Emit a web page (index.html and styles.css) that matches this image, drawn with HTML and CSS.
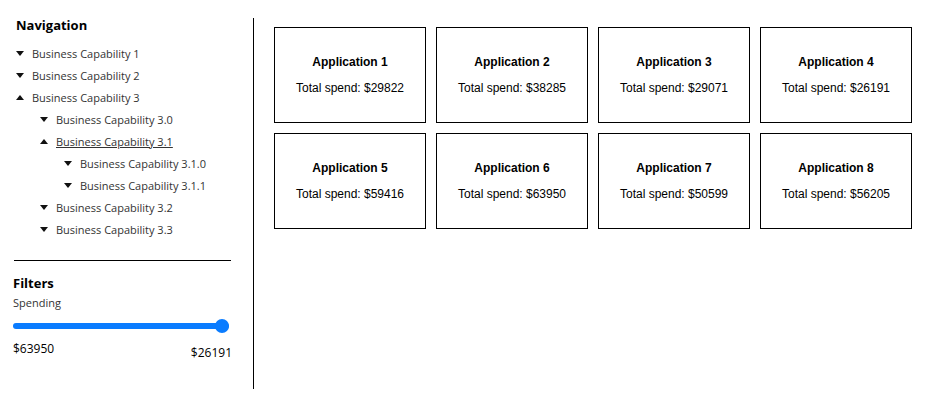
FILE: index.html
```html
<!DOCTYPE html>
<html>
<head>
<meta charset="utf-8">
<link rel="stylesheet" href="styles.css">
</head>
<body>
<div class="layout">
  <aside class="sidebar">
    <section class="nav">
      <h2 class="nav-title">Navigation</h2>
      <ul class="tree">
        <li class="node"><span class="caret down"></span><span class="label">Business Capability 1</span></li>
        <li class="node"><span class="caret down"></span><span class="label">Business Capability 2</span></li>
        <li class="node"><span class="caret up"></span><span class="label">Business Capability 3</span></li>
        <li class="node lvl2"><span class="caret down"></span><span class="label">Business Capability 3.0</span></li>
        <li class="node lvl2"><span class="caret up"></span><span class="label active">Business Capability 3.1</span></li>
        <li class="node lvl3"><span class="caret down"></span><span class="label">Business Capability 3.1.0</span></li>
        <li class="node lvl3"><span class="caret down"></span><span class="label">Business Capability 3.1.1</span></li>
        <li class="node lvl2"><span class="caret down"></span><span class="label">Business Capability 3.2</span></li>
        <li class="node lvl2"><span class="caret down"></span><span class="label">Business Capability 3.3</span></li>
      </ul>
    </section>
    <hr class="rule">
    <section class="filters">
      <h2 class="filters-title">Filters</h2>
      <div class="filter-label">Spending</div>
      <input class="slider" type="range" min="26191" max="63950" value="63950">
      <div class="range-values">
        <span class="min">$63950</span>
        <span class="max">$26191</span>
      </div>
    </section>
  </aside>
  <div class="divider"></div>
  <main class="main">
    <div class="grid">
      <div class="card"><div class="card-title">Application 1</div><div class="card-spend">Total spend: $29822</div></div>
      <div class="card"><div class="card-title">Application 2</div><div class="card-spend">Total spend: $38285</div></div>
      <div class="card"><div class="card-title">Application 3</div><div class="card-spend">Total spend: $29071</div></div>
      <div class="card"><div class="card-title">Application 4</div><div class="card-spend">Total spend: $26191</div></div>
      <div class="card"><div class="card-title">Application 5</div><div class="card-spend">Total spend: $59416</div></div>
      <div class="card"><div class="card-title">Application 6</div><div class="card-spend">Total spend: $63950</div></div>
      <div class="card"><div class="card-title">Application 7</div><div class="card-spend">Total spend: $50599</div></div>
      <div class="card"><div class="card-title">Application 8</div><div class="card-spend">Total spend: $56205</div></div>
    </div>
  </main>
</div>
</body>
</html>
```

FILE: styles.css
```css
* { box-sizing: border-box; }
html, body { margin: 0; padding: 0; background: #fff; }
body { font-family: "Open Sans", "Noto Sans", sans-serif; color: #222; }

.layout { display: flex; align-items: flex-start; }

.sidebar {
  width: 253px;
  padding: 17px 22px 0 13px;
  display: flex;
  flex-direction: column;
}

.nav { padding-left: 3px; }
.nav-title {
  margin: 0;
  font-size: 13px;
  line-height: 16px;
  font-weight: 700;
  color: #000;
}

.tree { list-style: none; margin: 9px 0 0; padding: 0; }
.node {
  display: flex;
  align-items: center;
  height: 22px;
  font-size: 11px;
  color: #333;
}
.node.lvl2 { padding-left: 24px; }
.node.lvl3 { padding-left: 48px; }

.caret {
  width: 0; height: 0;
  border-left: 4px solid transparent;
  border-right: 4px solid transparent;
  margin-right: 8px;
}
.caret.down { border-top: 5px solid #111; }
.caret.up { border-bottom: 5px solid #111; }

.label.active { text-decoration: underline; }

.rule {
  margin: 20px 0 0 1px;
  border: 0;
  border-top: 1px solid #000;
  height: 0;
  width: 217px;
}

.filters { display: flex; flex-direction: column; padding-top: 14px; }
.filters-title {
  margin: 0;
  font-size: 13px;
  line-height: 16px;
  font-weight: 700;
  color: #000;
}
.filter-label {
  margin-top: 5px;
  font-size: 11px;
  line-height: 14px;
  color: #333;
}

.slider {
  -webkit-appearance: none;
  appearance: none;
  margin: 9px 0 0;
  width: 216px;
  height: 14px;
  background: transparent;
  padding: 0;
}
.slider::-webkit-slider-runnable-track {
  height: 6px;
  border-radius: 3px;
  background: #0a7cff;
}
.slider::-webkit-slider-thumb {
  -webkit-appearance: none;
  appearance: none;
  width: 14px;
  height: 14px;
  border-radius: 50%;
  background: #0a7cff;
  margin-top: -4px;
  border: 0;
}

.range-values {
  display: flex;
  justify-content: space-between;
  align-items: flex-start;
  width: 219px;
  margin-top: 8px;
  font-size: 12px;
  line-height: 16px;
  color: #000;
}
.range-values .max { margin-top: 4px; }

.divider {
  width: 1px;
  height: 371px;
  margin-top: 18px;
  background: #000;
  flex: none;
}

.main { padding: 27px 0 0 20px; }
.grid {
  display: grid;
  grid-template-columns: repeat(4, 152px);
  grid-auto-rows: 96px;
  gap: 10px;
}
.card {
  border: 1px solid #000;
  display: flex;
  flex-direction: column;
  align-items: center;
  justify-content: center;
  font-family: "Liberation Sans", Arial, sans-serif;
  font-size: 12px;
  color: #000;
}
.card-title { font-weight: 700; line-height: 14px; }
.card-spend { margin-top: 12px; line-height: 14px; }
```
